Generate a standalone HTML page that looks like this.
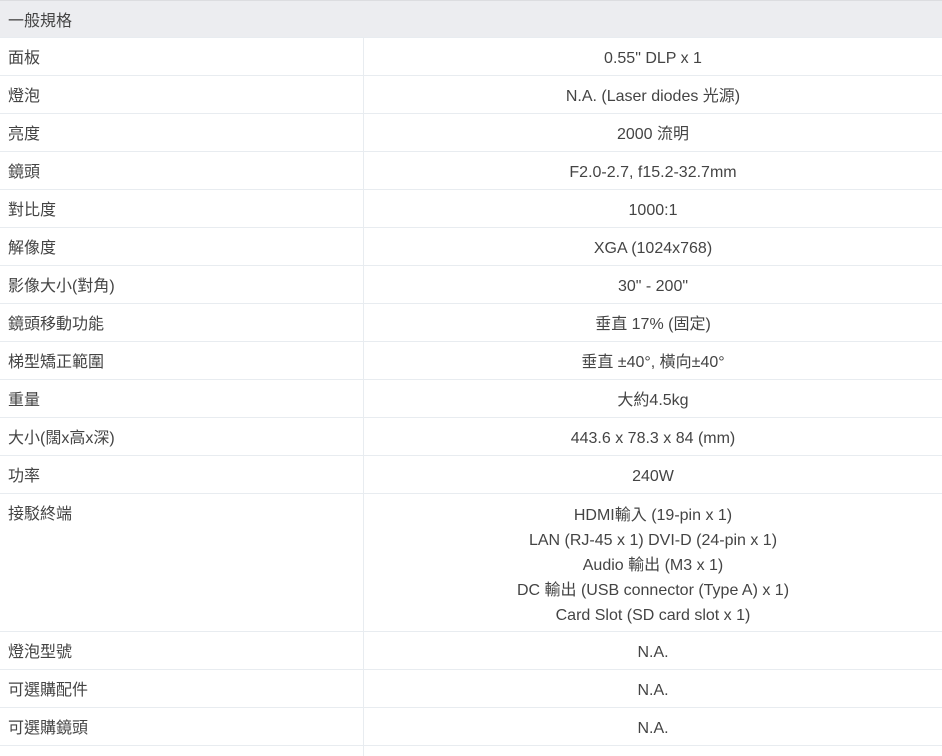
<!DOCTYPE html>
<html><head><meta charset="utf-8"><style>
body{margin:0;width:942px;height:752px;overflow:hidden;background:#fff;font-family:"Liberation Sans","Noto Sans CJK TC",sans-serif;font-size:16px;color:#444;}
.r{position:absolute;left:0;width:942px;border-bottom:1px solid #e8ecf0;box-sizing:border-box;}
.l{position:absolute;left:8px;top:2px;line-height:38px;}
.v{position:absolute;left:363px;width:579px;top:0;bottom:0;border-left:1px solid #e8ecf0;text-align:center;line-height:38px;padding-top:2px;box-sizing:border-box;}
.h{background:#ecedf0;border-top:1px solid #dcdde0;}
</style></head><body>
<div class="r h" style="top:0;height:38px"><div class="l">一般規格</div></div>
<div class="r" style="top:38px;height:38px"><div class="l">面板</div><div class="v">0.55" DLP x 1</div></div>
<div class="r" style="top:76px;height:38px"><div class="l">燈泡</div><div class="v">N.A. (Laser diodes 光源)</div></div>
<div class="r" style="top:114px;height:38px"><div class="l">亮度</div><div class="v">2000 流明</div></div>
<div class="r" style="top:152px;height:38px"><div class="l">鏡頭</div><div class="v">F2.0-2.7, f15.2-32.7mm</div></div>
<div class="r" style="top:190px;height:38px"><div class="l">對比度</div><div class="v">1000:1</div></div>
<div class="r" style="top:228px;height:38px"><div class="l">解像度</div><div class="v">XGA (1024x768)</div></div>
<div class="r" style="top:266px;height:38px"><div class="l">影像大小(對角)</div><div class="v">30" - 200"</div></div>
<div class="r" style="top:304px;height:38px"><div class="l">鏡頭移動功能</div><div class="v">垂直 17% (固定)</div></div>
<div class="r" style="top:342px;height:38px"><div class="l">梯型矯正範圍</div><div class="v">垂直 ±40°, 橫向±40°</div></div>
<div class="r" style="top:380px;height:38px"><div class="l">重量</div><div class="v">大約4.5kg</div></div>
<div class="r" style="top:418px;height:38px"><div class="l">大小(闊x高x深)</div><div class="v">443.6 x 78.3 x 84 (mm)</div></div>
<div class="r" style="top:456px;height:38px"><div class="l">功率</div><div class="v">240W</div></div>
<div class="r" style="top:494px;height:138px"><div class="l">接駁終端</div><div class="v" style="line-height:25px;padding-top:9px">HDMI輸入 (19-pin x 1)<br>LAN (RJ-45 x 1) DVI-D (24-pin x 1)<br>Audio 輸出 (M3 x 1)<br>DC 輸出 (USB connector (Type A) x 1)<br>Card Slot (SD card slot x 1)</div></div>
<div class="r" style="top:632px;height:38px"><div class="l">燈泡型號</div><div class="v">N.A.</div></div>
<div class="r" style="top:670px;height:38px"><div class="l">可選購配件</div><div class="v">N.A.</div></div>
<div class="r" style="top:708px;height:38px"><div class="l">可選購鏡頭</div><div class="v">N.A.</div></div>
<div class="r" style="top:746px;height:10px;border:0"><div class="v"></div></div>
</body></html>
